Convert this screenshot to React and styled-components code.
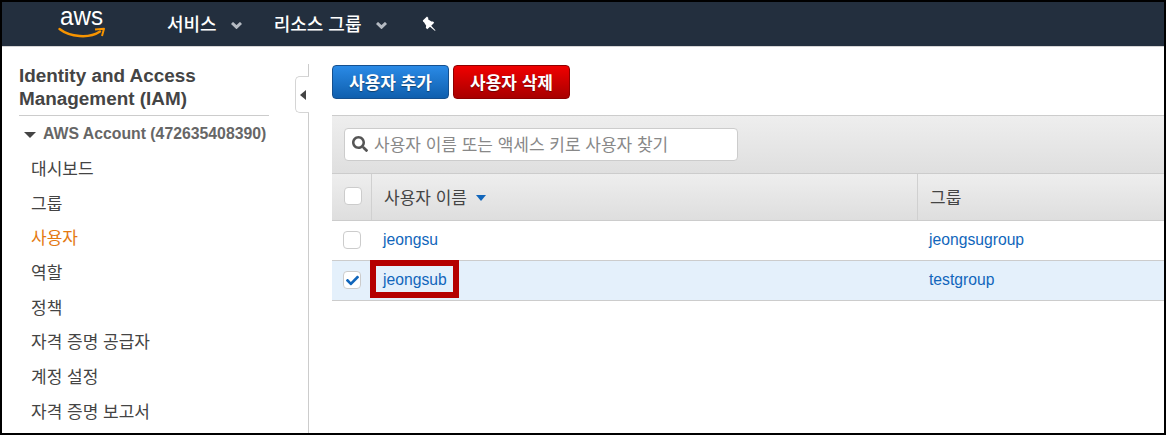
import React from "react";
import styled, { createGlobalStyle } from "styled-components";
import { FaCheck, FaSearch } from "react-icons/fa";

const KR = `"Liberation Sans", "Noto Sans CJK KR", sans-serif`;

const GlobalStyle = createGlobalStyle`
  html, body { margin: 0; padding: 0; background: #fff; }
  * { box-sizing: border-box; }
  body { font-family: ${KR}; }
`;

const Frame = styled.div`
  width: 1166px;
  height: 435px;
  border: 2px solid #000;
  overflow: hidden;
  display: flex;
  flex-direction: column;
`;

const TopBar = styled.header`
  height: 45px;
  flex: none;
  background: #232f3e;
  border-bottom: 1px solid #d5d5d5;
  display: flex;
  align-items: center;
  color: #fff;
`;

const Logo = styled.svg`
  width: 46px;
  height: 32px;
  margin: 0 0 0 57px;
  overflow: visible;
`;

const NavItem = styled.div`
  display: flex;
  align-items: center;
  font-size: 18px;
  font-weight: 500;
  margin-left: ${(p) => p.$left}px;
  padding-bottom: 3px;
  gap: 14px;
`;

const Chevron = styled.svg`
  width: 11px;
  height: 7px;
  margin-top: 5px;
`;

const Pin = styled.svg`
  width: 15px;
  height: 15px;
  margin-left: 35px;
  margin-bottom: 2px;
`;

const Body = styled.div`
  flex: 1;
  display: flex;
  min-height: 0;
`;

const Sidebar = styled.aside`
  position: relative;
  width: 307px;
  flex: none;
  margin-top: 17px;
  padding: 0 0 0 17px;
  border-right: 1px solid #ccc;
`;

const CollapseTab = styled.div`
  position: absolute;
  top: 12px;
  right: -1px;
  width: 14px;
  height: 37px;
  background: #fff;
  border: 1px solid #d5d5d5;
  border-right: 0;
  border-radius: 5px 0 0 5px;
  display: flex;
  align-items: center;
  justify-content: center;
  &::before {
    content: "";
    border-style: solid;
    border-width: 5px 6px 5px 0;
    border-color: transparent #444 transparent transparent;
  }
`;

const SideTitle = styled.h1`
  margin: 0;
  width: 250px;
  padding-bottom: 5px;
  border-bottom: 1px solid #ccc;
  font-size: 18.9px;
  line-height: 23px;
  font-weight: 700;
  color: #444;
`;

const AccountRow = styled.div`
  display: flex;
  align-items: center;
  gap: 7px;
  height: 36px;
  padding-left: 5px;
  font-size: 15.8px;
  font-weight: 700;
  color: #666;
  white-space: nowrap;
  &::before {
    content: "";
    border-style: solid;
    border-width: 6px 6px 0 6px;
    border-color: #444 transparent transparent transparent;
    margin-top: 2px;
  }
`;

const SideMenu = styled.nav`
  display: flex;
  flex-direction: column;
  padding: 1px 0 0 12px;
`;

const SideLink = styled.a`
  height: 34.7px;
  line-height: 34.7px;
  font-size: 17px;
  color: ${(p) => (p.$active ? "#e47911" : "#444")};
`;

const Main = styled.main`
  flex: 1;
  min-width: 0;
  padding: 18px 0 0 23px;
`;

const Toolbar = styled.div`
  display: flex;
  gap: 4px;
  margin-bottom: 16px;
`;

const ActionButton = styled.button`
  width: 117px;
  height: 34px;
  padding: 0 0 2px;
  border-radius: 4px;
  font-family: ${KR};
  font-size: 17px;
  font-weight: 700;
  color: #fff;
  text-shadow: 0 1px 1px rgba(0, 0, 0, 0.4);
  border: 1px solid ${(p) => (p.$danger ? "#8e0000" : "#15508f")};
  background: ${(p) =>
    p.$danger
      ? "linear-gradient(#f00000, #a80000)"
      : "linear-gradient(#2a8ae6, #0f5fae)"};
`;

const SearchPanel = styled.div`
  height: 59px;
  padding: 12px;
  background: linear-gradient(#eeeeee, #dfdfdf);
  border-top: 1px solid #ccc;
  border-bottom: 1px solid #ccc;
`;

const SearchBox = styled.div`
  width: 394px;
  height: 33px;
  display: flex;
  align-items: center;
  gap: 6px;
  padding: 0 0 2px 7px;
  background: #fff;
  border: 1px solid #ccc;
  border-radius: 4px;
  color: #555;
  font-size: 17px;
`;

const SearchText = styled.span`
  color: #888;
  font-size: 17px;
`;

const Row = styled.div`
  display: grid;
  grid-template-columns: 39px 546px 1fr;
  height: ${(p) => (p.$head ? 47 : 40)}px;
  background: ${(p) =>
    p.$head
      ? "linear-gradient(#eeeeee, #dedede)"
      : p.$selected
        ? "#e4f0fb"
        : "#fff"};
  border-bottom: 1px solid #ccc;
`;

const Cell = styled.div`
  display: flex;
  align-items: center;
  min-width: 0;
  padding: 0 0 ${(p) => p.$lift ?? 1}px 12px;
  border-left: ${(p) => (p.$divider ? "1px solid #d0d0d0" : "0")};
`;

const CheckCell = styled(Cell)`
  padding-left: ${(p) => (p.$head ? 12 : 11)}px;
`;

const CheckBox = styled.span`
  width: 18px;
  height: 18px;
  background: #fff;
  border: 1px solid #ccc;
  border-radius: 4px;
  display: flex;
  align-items: center;
  justify-content: center;
  color: #1166bb;
  font-size: 13px;
`;

const HeadLabel = styled.span`
  font-size: 17px;
  color: #444;
  display: flex;
  align-items: center;
  gap: 9px;
`;

const SortArrow = styled.span`
  border-style: solid;
  border-width: 6px 5.5px 0 5.5px;
  border-color: #1166bb transparent transparent transparent;
  margin-top: 3px;
`;

const UserLink = styled.a`
  font-size: 15.7px;
  color: #1166bb;
`;

const MarkedLink = styled(UserLink)`
  position: relative;
  &::after {
    content: "";
    position: absolute;
    left: -13px;
    right: -12px;
    top: -11px;
    bottom: -9px;
    border: 6px solid #b50000;
  }
`;

const menu = ["대시보드", "그룹", "사용자", "역할", "정책", "자격 증명 공급자", "계정 설정", "자격 증명 보고서"];

function DownChevron() {
  return (
    <Chevron viewBox="0 0 11 7">
      <path d="M1 1 L5.5 5.2 L10 1" fill="none" stroke="#b4bac2" strokeWidth="3" />
    </Chevron>
  );
}

function AwsLogo() {
  return (
    <Logo viewBox="0 0 46 32">
      <text
        x="1"
        y="17"
        fontFamily="Liberation Sans, sans-serif"
        fontSize="26"
        fill="#fff"
        textLength="43"
        lengthAdjust="spacingAndGlyphs"
      >
        aws
      </text>
      <path d="M0.5 21 C11 29 30 31 41 23.5" fill="none" stroke="#f79400" strokeWidth="2.4" strokeLinecap="round" />
      <path d="M36 21.6 L45 20.8 L43 28" fill="none" stroke="#f79400" strokeWidth="2" strokeLinejoin="round" />
    </Logo>
  );
}

function PinIcon() {
  return (
    <Pin viewBox="0 0 15 15">
      <path
        d="M0.8 4.4 L5 0.6 L6.4 2 L6 3.2 L9.4 5.6 L11 5.4 L12.2 6.8 L9.2 9.8 L13.6 14.4 L12.8 14.8 L8 10.8 L5.2 13.2 L3.8 11.8 L4.2 9.8 L2 6.2 L1.2 5.8 Z"
        fill="#fff"
      />
    </Pin>
  );
}

export default function App() {
  return (
    <>
      <GlobalStyle />
      <Frame>
        <TopBar>
          <AwsLogo />
          <NavItem $left={62}>
            서비스
            <DownChevron />
          </NavItem>
          <NavItem $left={32}>
            리소스 그룹
            <DownChevron />
          </NavItem>
          <PinIcon />
        </TopBar>
        <Body>
          <Sidebar>
            <CollapseTab />
            <SideTitle>
              Identity and Access
              <br />
              Management (IAM)
            </SideTitle>
            <AccountRow>AWS Account (472635408390)</AccountRow>
            <SideMenu>
              {menu.map((item) => (
                <SideLink key={item} $active={item === "사용자"}>
                  {item}
                </SideLink>
              ))}
            </SideMenu>
          </Sidebar>
          <Main>
            <Toolbar>
              <ActionButton>사용자 추가</ActionButton>
              <ActionButton $danger>사용자 삭제</ActionButton>
            </Toolbar>
            <SearchPanel>
              <SearchBox>
                <FaSearch size={16} />
                <SearchText>사용자 이름 또는 액세스 키로 사용자 찾기</SearchText>
              </SearchBox>
            </SearchPanel>
            <Row $head>
              <CheckCell $head $lift={2}>
                <CheckBox />
              </CheckCell>
              <Cell $divider $lift={2}>
                <HeadLabel>
                  사용자 이름
                  <SortArrow />
                </HeadLabel>
              </Cell>
              <Cell $divider $lift={2}>
                <HeadLabel>그룹</HeadLabel>
              </Cell>
            </Row>
            <Row>
              <CheckCell>
                <CheckBox />
              </CheckCell>
              <Cell>
                <UserLink>jeongsu</UserLink>
              </Cell>
              <Cell>
                <UserLink>jeongsugroup</UserLink>
              </Cell>
            </Row>
            <Row $selected>
              <CheckCell>
                <CheckBox>
                  <FaCheck />
                </CheckBox>
              </CheckCell>
              <Cell>
                <MarkedLink>jeongsub</MarkedLink>
              </Cell>
              <Cell>
                <UserLink>testgroup</UserLink>
              </Cell>
            </Row>
          </Main>
        </Body>
      </Frame>
    </>
  );
}
